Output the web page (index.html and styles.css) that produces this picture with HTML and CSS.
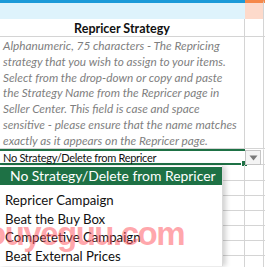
FILE: index.html
```html
<!DOCTYPE html>
<html>
<head>
<meta charset="utf-8">
<link rel="stylesheet" href="styles.css">
</head>
<body>
<div class="sheet">
  <div class="grid">
    <div class="cell hdr-a"></div>
    <div class="cell hdr-b"></div>
    <div class="cell hdr-c"></div>

    <div class="cell title">Repricer Strategy</div>
    <div class="cell"></div>
    <div class="cell"></div>

    <div class="cell desc">Alphanumeric, 75 characters - The Repricing<br>strategy that you wish to assign to your items.<br>Select from the drop-down or copy and paste<br>the Strategy Name from the Repricer page in<br>Seller Center. This field is case and space<br>sensitive - please ensure that the name matches<br>exactly as it appears on the Repricer page.</div>
    <div class="cell"></div>
    <div class="cell"></div>

    <div class="cell sel">No Strategy/Delete from Repricer<span class="handle"></span></div>
    <div class="cell ddcell"><span class="ddbtn"><svg width="9" height="6" viewBox="0 0 9 6"><path d="M0.5 0.5h8L4.5 5.5z" fill="#7a7a7a"/></svg></span></div>
    <div class="cell"></div>

    <div class="cell r"></div><div class="cell r"></div><div class="cell r"></div>
    <div class="cell r"></div><div class="cell r"></div><div class="cell r"></div>
    <div class="cell r"></div><div class="cell r"></div><div class="cell r"></div>
    <div class="cell r"></div><div class="cell r"></div><div class="cell r"></div>
    <div class="cell r"></div><div class="cell r"></div><div class="cell r"></div>
    <div class="cell r"></div><div class="cell r"></div><div class="cell r"></div>
    <div class="cell r"></div><div class="cell r"></div><div class="cell r"></div>
  </div>

  <ul class="menu">
    <li class="item active">No Strategy/Delete from Repricer</li>
    <li class="item">Repricer Campaign</li>
    <li class="item">Beat the Buy Box</li>
    <li class="item">Competetive Campaign</li>
    <li class="item">Beat External Prices</li>
  </ul>

  <div class="watermark">ouyeguu.com</div>
</div>
</body>
</html>
```

FILE: styles.css
```css
html, body {
  margin: 0;
  padding: 0;
  background: #ffffff;
}

body {
  width: 265px;
  height: 267px;
  overflow: hidden;
  font-family: Lato, "Open Sans", sans-serif;
}

.sheet {
  position: relative;
  width: 265px;
  height: 267px;
  overflow: hidden;
}

.grid {
  display: grid;
  grid-template-columns: 245px 19px 40px;
  grid-template-rows: 19px 18px 112px 16px 16px repeat(6, 15px);
}

.cell {
  border-right: 1px solid #d4d4d4;
  border-bottom: 1px solid #d4d4d4;
  box-sizing: border-box;
  position: relative;
}

.hdr-a {
  background: #def3fc;
  border-top: 3px solid #1b9ad8;
  border-bottom: none;
  border-right: none;
}

.hdr-b {
  background: #fddacb;
  border-top: 3px solid #f5884a;
  border-bottom: none;
}

.hdr-c {
  border-top: 3px solid #f5884a;
  border-bottom: none;
}

.title {
  font-weight: 700;
  font-size: 12.5px;
  color: #111;
  text-align: center;
  line-height: 18px;
  padding-top: 1px;
}

.desc {
  font-style: italic;
  font-size: 11.8px;
  line-height: 15.8px;
  color: #7f7f7f;
  padding: 1px 0 0 3px;
  white-space: nowrap;
}

.sel {
  border-top: 2px solid #1e7145;
  border-bottom: 2px solid #1e7145;
  border-right: none;
  font-size: 11px;
  letter-spacing: -0.3px;
  line-height: 13px;
  color: #111;
  padding-left: 3px;
  white-space: nowrap;
}

.handle {
  position: absolute;
  right: -3px;
  bottom: -4px;
  width: 5px;
  height: 5px;
  background: #1e7145;
  border: 1px solid #fff;
}

.ddcell {
  border-top: 1px solid #fff;
}

.ddbtn {
  position: absolute;
  left: 0;
  top: 0;
  width: 14px;
  height: 13px;
  background: #f4f4f4;
  border: 1px solid #c6c6c6;
  display: flex;
  align-items: center;
  justify-content: center;
}

.menu {
  position: absolute;
  left: -1px;
  top: 166px;
  width: 223px;
  margin: 0;
  padding: 1px 0 0 0;
  list-style: none;
  background: #fff;
  box-shadow: 3px 0 5px rgba(0, 0, 0, 0.18);
  border-right: 1px solid #dadada;
}

.item {
  font-size: 13.2px;
  line-height: 18.7px;
  color: #111;
  padding-left: 6px;
  white-space: nowrap;
}

.item.active {
  background: #1e7145;
  color: #fff;
  font-size: 13.9px;
  line-height: 18px;
  padding-left: 11px;
  margin-bottom: 6px;
}

.watermark {
  position: absolute;
  left: -14px;
  top: 215px;
  font-family: "Liberation Sans", Arial, sans-serif;
  font-weight: 700;
  font-size: 33px;
  letter-spacing: -1.5px;
  color: rgba(255, 80, 90, 0.5);
  pointer-events: none;
  white-space: nowrap;
}
```
